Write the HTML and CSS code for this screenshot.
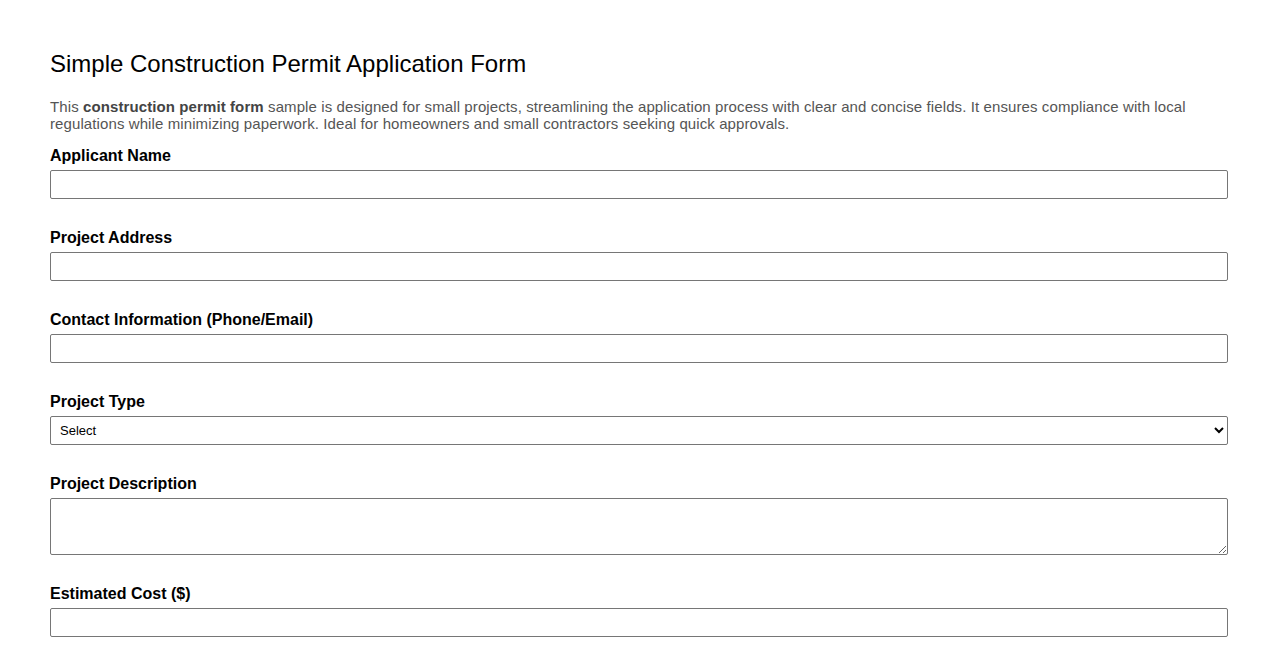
FILE: index.html
```html
<!DOCTYPE html>
<html lang="en">
<head>
    <meta charset="UTF-8">
    <meta name="viewport" content="width=device-width, initial-scale=1.0">
    <title>Simple Construction Permit Application Form</title>
    <link rel="stylesheet" href="styles.css">
</head>
<body>
    <div class="container">
        <h1>Simple Construction Permit Application Form</h1>
        <p class="intro">This <strong>construction permit form</strong> sample is designed for small projects, streamlining the application process with clear and concise fields. It ensures compliance with local regulations while minimizing paperwork. Ideal for homeowners and small contractors seeking quick approvals.</p>

        <form>
            <div class="form-group">
                <label for="name">Applicant Name</label>
                <input type="text" id="name">
            </div>
            <div class="form-group">
                <label for="address">Project Address</label>
                <input type="text" id="address">
            </div>
            <div class="form-group">
                <label for="contact">Contact Information (Phone/Email)</label>
                <input type="text" id="contact">
            </div>
            <div class="form-group">
                <label for="type">Project Type</label>
                <select id="type">
                    <option>Select</option>
                    <option>New Construction</option>
                    <option>Renovation</option>
                    <option>Addition</option>
                    <option>Demolition</option>
                </select>
            </div>
            <div class="form-group">
                <label for="description">Project Description</label>
                <textarea id="description"></textarea>
            </div>
            <div class="form-group">
                <label for="cost">Estimated Cost ($)</label>
                <input type="text" id="cost">
            </div>
        </form>
    </div>
</body>
</html>
```

FILE: styles.css
```css
body {
    font-family: Arial, "Liberation Sans", sans-serif;
    margin: 0;
    background-color: #fff;
    color: #000;
}
.container {
    padding: 50px 50px;
}
h1 {
    font-size: 24px;
    font-weight: normal;
    margin: 0 0 20px 0;
}
.intro {
    font-size: 15px;
    line-height: 17px;
    letter-spacing: 0.1px;
    color: #555;
    margin: 0 0 15px 0;
}
.intro strong {
    color: #444;
}
.form-group {
    margin-bottom: 30px;
}
.form-group label {
    display: block;
    font-size: 16px;
    font-weight: bold;
    line-height: 18px;
    margin-bottom: 5px;
}
.form-group input,
.form-group select,
.form-group textarea {
    display: block;
    width: 100%;
    box-sizing: border-box;
    height: 29px;
    padding: 4px 8px;
    font-family: Arial, "Liberation Sans", sans-serif;
    font-size: 13px;
    border: 1px solid #767676;
    border-radius: 2px;
    background-color: #fff;
    color: #000;
}
.form-group select {
    padding-left: 5px;
}
.form-group textarea {
    height: 57px;
    resize: vertical;
}
```
